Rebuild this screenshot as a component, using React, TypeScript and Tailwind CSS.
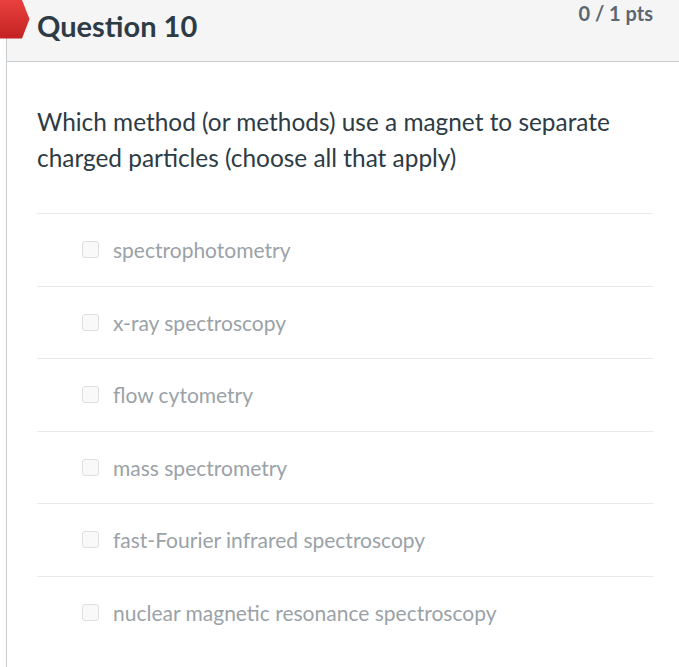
const options = [
  'spectrophotometry',
  'x-ray spectroscopy',
  'flow cytometry',
  'mass spectrometry',
  'fast-Fourier infrared spectroscopy',
  'nuclear magnetic resonance spectroscopy',
]

function Flag() {
  return (
    <svg className="absolute left-0 top-0" width="30" height="40" viewBox="0 0 30 40">
      <defs>
        <linearGradient id="flag" x1="0" y1="0" x2="0" y2="1">
          <stop offset="0" stopColor="#e8403f" />
          <stop offset="1" stopColor="#c42323" />
        </linearGradient>
      </defs>
      <polygon points="0,0 22,0 29.5,19 22,38.5 0,38.5" fill="url(#flag)" />
    </svg>
  )
}

export default function App() {
  return (
    <div className="relative h-[667px] w-[679px] overflow-hidden bg-white font-['Lato',sans-serif]">
      <Flag />
      <div className="ml-[6px] h-full border-l border-[#c7cdd1]">
        <div className="flex h-[62px] items-start justify-between border-b border-[#c7cdd1] bg-[#f5f5f5] pl-[30px] pr-[26px]">
          <h2 className="mt-[8px] text-[29px] font-bold leading-[36px] text-[#2d3b45]">Question 10</h2>
          <div className="text-[20px] font-bold leading-[26px] text-[#5b6770]">0 / 1 pts</div>
        </div>
        <div className="pl-[30px] pr-[26px] pt-[42px]">
          <p className="text-[24.4px] leading-[36px] text-[#2d3b45]">
            Which method (or methods) use a magnet to separate charged particles (choose all that apply)
          </p>
          <div className="mt-[37px]">
            {options.map((label) => (
              <div key={label} className="flex h-[72.5px] items-center border-t border-[#e8eaec] pl-[45px]">
                <span className="h-[17px] w-[17px] rounded-[3px] border border-[#dcdfe2] bg-[#f9f9f9]" />
                <span className="ml-[14px] text-[21px] text-[#9aa2a8]">{label}</span>
              </div>
            ))}
          </div>
        </div>
      </div>
    </div>
  )
}
